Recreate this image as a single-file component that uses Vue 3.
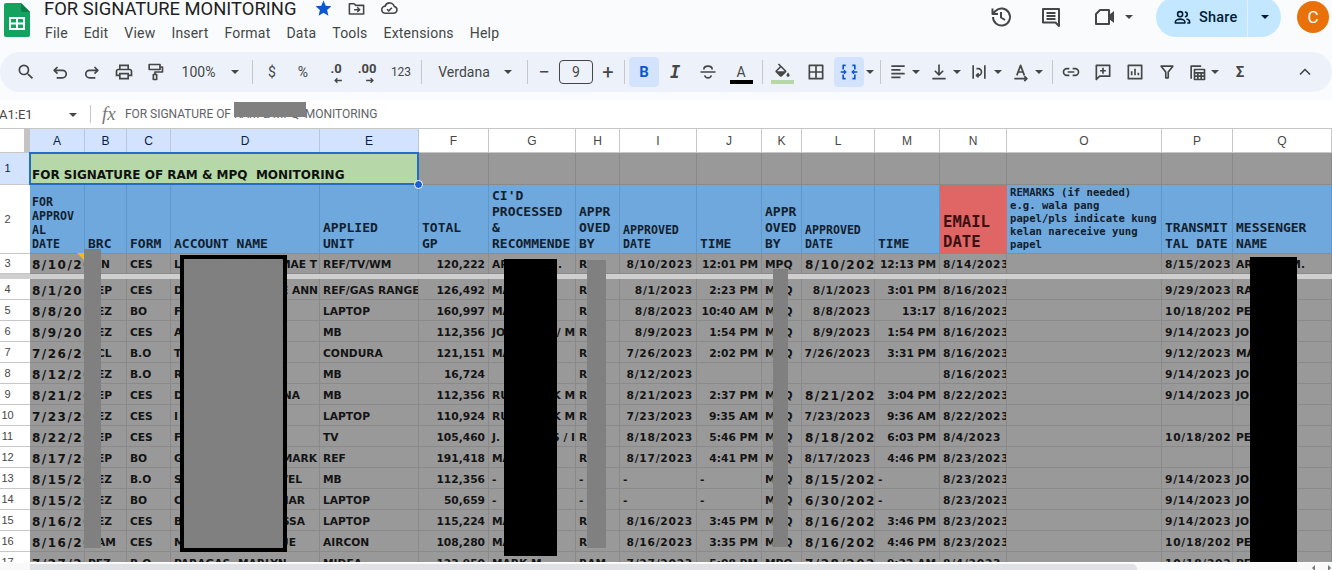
<script setup>
const icons = {
  search: { f: 'M15.5 14h-.79l-.28-.27A6.471 6.471 0 0 0 16 9.5 6.5 6.5 0 1 0 9.5 16c1.61 0 3.09-.59 4.23-1.57l.27.28v.79l5 4.99L20.49 19l-4.99-5zm-6 0C7.01 14 5 11.99 5 9.5S7.01 5 9.5 5 14 7.01 14 9.5 11.99 14 9.5 14z' },
  undo: { s: 'M9 6 5 10l4 4M5 10h10a4.5 4.5 0 0 1 0 9H8' },
  redo: { s: 'M15 6l4 4-4 4M19 10H9a4.5 4.5 0 0 0 0 9h7' },
  print: { f: 'M19 8h-1V3H6v5H5c-1.66 0-3 1.34-3 3v6h4v4h12v-4h4v-6c0-1.66-1.34-3-3-3zM8 5h8v3H8V5zm8 12v2H8v-4h8v2zm2-2v-2H6v2H4v-4c0-.55.45-1 1-1h14c.55 0 1 .45 1 1v4h-2z' },
  paint: { s: 'M5 3h13v6H5zM18 6h3v6h-9v3M10 15h4v6h-4z' },
  strike: { s: 'M7 9c0-2.500 2-4 5-4s5 1.500 5 4M3 12h18M8 16c.5 2 2 3 4 3s3.500-1 4-3' },
  fill: { f: 'M16.56 8.94L7.62 0 6.21 1.41l2.38 2.38-5.15 5.15c-.59.59-.59 1.54 0 2.12l5.5 5.5c.29.29.68.44 1.06.44s.77-.15 1.06-.44l5.5-5.5c.59-.58.59-1.53 0-2.12zM5.21 10L10 5.21 14.79 10H5.21zM19 11.5s-2 2.17-2 3.5c0 1.1.9 2 2 2s2-.9 2-2c0-1.33-2-3.5-2-3.5z' },
  borders: { s: 'M4 4h16v16H4zM12 4v16M4 12h16' },
  merge: { s: 'M8 4H5v5M16 4h3v5M8 20H5v-5M16 20h3v-5M2 12h6M6 10l2 2-2 2M22 12h-6M18 10l-2 2 2 2' },
  align: { s: 'M4 5h16M4 9.5h11M4 14h16M4 18.5h11' },
  valign: { s: 'M12 3v12M7 10.5l5 5 5-5M4 20h16' },
  wrap: { s: 'M5 4v16M19 4v16M9 8h2a4 4 0 0 1 0 8H9m2.500-2.500L9 16l2.500 2.500' },
  rotate: { s: 'M4 20h15M16 17l3 3-3 3M7 16l4.500-12L16 16M8.500 12h6' },
  link: { s: 'M10 8H7a4 4 0 0 0 0 8h3M14 8h3a4 4 0 0 1 0 8h-3M8 12h8' },
  addcomment: { s: 'M4 4h16v13H8l-4 4zM12 7v7M8.500 10.500h7' },
  chart: { s: 'M4 4h16v16H4zM8 16v-5M12 16V8M16 16v-3' },
  filter: { s: 'M5 5h14l-5.500 7v7h-3v-7z' },
  functions: { s: 'M5 20V5h12M9 9h12v12H9zM9 13h12M13 13v8M17 13v8M9 17h12' },
  collapse: { s: 'M6 15l6-6 6 6' },
  history: { s: 'M4 12a8.500 8.500 0 1 0 2.500-6L3.500 9M3.500 3.500V9H9M12 7v5.500l4 2.500' },
  topcomment: { s: 'M4 4h16v17l-3.500-3.500H4zM7.500 8h9M7.500 11h9M7.500 14h9' },
  meet: { s: 'M3 9l4-4h9v14H3z', f: 'M16 10l5-4v12l-5-4z' },
  people: { s: 'M9 11a3.200 3.200 0 1 0 0-6.400A3.200 3.200 0 0 0 9 11zM3 19v-1.500c0-2 3-3.500 6-3.500s6 1.500 6 3.500V19zM15 5a3 3 0 0 1 0 6M17 14c2.500.4 4 1.800 4 3.500V19h-3' },
  star: { f: 'M12 17.270L18.180 21l-1.640-7.030L22 9.240l-7.190-.610L12 2 9.190 8.630 2 9.240l5.460 4.730L5.820 21z' },
  move: { s: 'M3 6h6l2 2h10v11H3zM9 13.500h7M13 10.500l3 3-3 3' },
  cloud: { s: 'M7 18a4.500 4.500 0 0 1-.5-9A6 6 0 0 1 18 9.500a4.300 4.300 0 0 1-.5 8.500zM9 13l2 2 4-4' },
}

const menu = ['File', 'Edit', 'View', 'Insert', 'Format', 'Data', 'Tools', 'Extensions', 'Help']

const rawTools = [
  { x: 26, w: 20, k: 'icon', i: 'search' }, { x: 60, w: 20, k: 'icon', i: 'undo' }, { x: 92, w: 20, k: 'icon', i: 'redo' },
  { x: 124, w: 20, k: 'icon', i: 'print' }, { x: 155, w: 20, k: 'icon', i: 'paint' },
  { x: 198.500, w: 37, k: 'text', t: '100%' }, { x: 235, w: 8, k: 'caret' }, { x: 252, w: 1, k: 'sep' },
  { x: 272, w: 14, k: 'text', t: '$' }, { x: 303, w: 14, k: 'text', t: '%' },
  { x: 336, w: 18, k: 'dec', t: '.0', d: 'M7 3H1M3 1 1 3l2 2' }, { x: 367, w: 20, k: 'dec', t: '.00', d: 'M1 3h6M5 1l2 2-2 2' },
  { x: 401, w: 22, k: 'small', t: '123' }, { x: 421, w: 1, k: 'sep' },
  { x: 464, w: 54, k: 'text', t: 'Verdana' }, { x: 508, w: 8, k: 'caret' }, { x: 527, w: 1, k: 'sep' },
  { x: 544, w: 14, k: 'text', t: '−', c: 'big' }, { x: 576, w: 34, k: 'box', t: '9' }, { x: 608, w: 16, k: 'text', t: '+', c: 'big' },
  { x: 624, w: 1, k: 'sep' }, { x: 644, w: 30, k: 'text', t: 'B', c: 'bold on' },
  { x: 675, w: 16, k: 'text', t: 'I', c: 'ital' }, { x: 708, w: 20, k: 'icon', i: 'strike' },
  { x: 741, w: 23, k: 'color', t: 'A' }, { x: 762, w: 1, k: 'sep' }, { x: 782, w: 23, k: 'fill', i: 'fill' },
  { x: 816, w: 20, k: 'icon', i: 'borders' }, { x: 849, w: 30, k: 'icon', i: 'merge', c: 'on' }, { x: 870, w: 8, k: 'caret' },
  { x: 880, w: 1, k: 'sep' }, { x: 898, w: 20, k: 'icon', i: 'align' }, { x: 916, w: 8, k: 'caret' },
  { x: 939, w: 20, k: 'icon', i: 'valign' }, { x: 957, w: 8, k: 'caret' }, { x: 979, w: 20, k: 'icon', i: 'wrap' }, { x: 998, w: 8, k: 'caret' },
  { x: 1021, w: 20, k: 'icon', i: 'rotate' }, { x: 1039, w: 8, k: 'caret' }, { x: 1052, w: 1, k: 'sep' },
  { x: 1071, w: 20, k: 'icon', i: 'link' }, { x: 1103, w: 20, k: 'icon', i: 'addcomment' }, { x: 1135, w: 20, k: 'icon', i: 'chart' },
  { x: 1167, w: 20, k: 'icon', i: 'filter' }, { x: 1197, w: 22, k: 'icon', i: 'functions' }, { x: 1215, w: 8, k: 'caret' },
  { x: 1240, w: 14, k: 'text', t: 'Σ', c: 'bold' }, { x: 1305, w: 20, k: 'icon', i: 'collapse' },
]
let edge = 0
const tools = rawTools.map((t) => {
  const left = t.x - t.w / 2
  const out = { ...t, style: { width: t.w + 'px', marginLeft: left - edge + 'px' } }
  edge = left + t.w
  return out
})

const colNames = 'ABCDEFGHIJKLMNOPQ'.split('')
const selected = 'ABCDE'

const heads = [
  { t: 'FOR\nAPPROV\nAL\nDATE', c: 'h12 first' }, { t: 'BRC' }, { t: 'FORM' }, { t: 'ACCOUNT NAME' }, { t: 'APPLIED\nUNIT' }, { t: 'TOTAL\nGP' },
  { t: "CI'D\nPROCESSED\n&\nRECOMMENDE" }, { t: 'APPR\nOVED\nBY' }, { t: 'APPROVED\nDATE', c: 'h12' }, { t: 'TIME' },
  { t: 'APPR\nOVED\nBY' }, { t: 'APPROVED\nDATE', c: 'h12' }, { t: 'TIME' }, { t: 'EMAIL\nDATE', c: 'hred' },
  { t: 'REMARKS (if needed)\ne.g. wala pang\npapel/pls indicate kung\nkelan nareceive yung\npapel', c: 'h10' },
  { t: 'TRANSMIT\nTAL DATE' }, { t: 'MESSENGER\nNAME' },
]

const data = [
  [3, '8/10/2023', 'N', 'CES', 'L', ['MAE T', 2], 'REF/TV/WM', '120,222', 'AR', ['.', 13], 'RAM', '8/10/2023', '12:01 PM', 'MPQ', '8/10/2023', 1, '12:13 PM', '8/14/2023', '8/15/2023', 'AR', ['M.', 26]],
  [4, '8/1/2023', 'EP', 'CES', 'D', ['E ANN', 1], 'REF/GAS RANGE', '126,492', 'MA', null, 'RAM', '8/1/2023', '2:23 PM', 'MPQ', '8/1/2023', 0, '3:01 PM', '8/16/2023', '9/29/2023', 'RA'],
  [5, '8/8/2023', 'EZ', 'BO', 'F', null, 'LAPTOP', '160,997', 'MA', null, 'RAM', '8/8/2023', '10:40 AM', 'MPQ', '8/8/2023', 0, '13:17', '8/16/2023', '10/18/2023', 'PE'],
  [6, '8/9/2023', 'EZ', 'CES', 'A', null, 'MB', '112,356', 'JO', ['/ M', 0], 'RAM', '8/9/2023', '1:54 PM', 'MPQ', '8/9/2023', 0, '1:54 PM', '8/16/2023', '9/14/2023', 'JO'],
  [7, '7/26/2023', 'CL', 'B.O', 'T', null, 'CONDURA', '121,151', 'MA', null, 'RAM', '7/26/2023', '2:02 PM', 'MPQ', '7/26/2023', 0, '3:31 PM', '8/16/2023', '9/12/2023', 'MA'],
  [8, '8/12/2023', 'EZ', 'B.O', 'R', null, 'MB', '16,724', '', null, 'RAM', '8/12/2023', '', '', '', 0, '', '8/16/2023', '9/14/2023', 'JO'],
  [9, '8/21/2023', 'EP', 'CES', 'D', ['NA', 19], 'MB', '112,356', 'RU', ['K M', 0], 'RAM', '8/21/2023', '2:37 PM', 'MPQ', '8/21/2023', 1, '3:04 PM', '8/22/2023', '9/14/2023', 'JO'],
  [10, '7/23/2023', 'EZ', 'CES', 'I', null, 'LAPTOP', '110,924', 'RU', ['K M', 0], 'RAM', '7/23/2023', '9:35 AM', 'MPQ', '7/23/2023', 0, '9:36 AM', '8/22/2023', '', ''],
  [11, '8/22/2023', 'EP', 'CES', 'F', null, 'TV', '105,460', 'J.', ['S / I', 0], 'RAM', '8/18/2023', '5:46 PM', 'MPQ', '8/18/2023', 1, '6:03 PM', '8/4/2023', '10/18/2023', 'PE'],
  [12, '8/17/2023', 'EP', 'BO', 'G', ['MARK', 2], 'REF', '191,418', 'MA', null, 'RAM', '8/17/2023', '4:41 PM', 'MPQ', '8/17/2023', 0, '4:46 PM', '8/23/2023', '', ''],
  [13, '8/15/2023', 'EZ', 'B.O', 'S', ['VEL', 17], 'MB', '112,356', '-', null, '-', '-', '-', 'MPQ', '8/15/2023', 1, '-', '8/23/2023', '9/14/2023', 'JO'],
  [14, '8/15/2023', 'EZ', 'BO', 'C', ['MAR', 14], 'LAPTOP', '50,659', '-', null, '-', '-', '-', 'MPQ', '6/30/2023', 1, '-', '8/23/2023', '9/14/2023', 'JO'],
  [15, '8/16/2023', 'EZ', 'CES', 'B', ['SSA', 14], 'LAPTOP', '115,224', 'MA', null, 'RAM', '8/16/2023', '3:45 PM', 'MPQ', '8/16/2023', 1, '3:46 PM', '8/23/2023', '9/14/2023', 'JO'],
  [16, '8/16/2023', 'AM', 'CES', 'M', ['UE', 23], 'AIRCON', '108,280', 'MA', null, 'RAM', '8/16/2023', '3:35 PM', 'MPQ', '8/16/2023', 1, '4:46 PM', '8/23/2023', '10/18/2023', 'PE'],
  [17, '7/27/2023', 'PEZ', 'B.O', 'PARAGAS, MARLYN', null, 'MIDEA', '123,950', 'MARK M.', null, 'RAM', '7/27/2023', '5:08 PM', 'MPQ', '7/28/2023', 1, '9:22 AM', '8/4/2023', '10/18/2023', 'PE'],
]

const side = (t, pair, cls) => ({ t, r: pair ? pair[0] : '', gap: pair ? pair[1] : 0, c: cls })
const rows = data.map((d) => {
  const [n, a, b, c, dl, dr, e, f, gl, gr, h, i, j, k, l, lbig, m, nd, p, q, qr] = d
  const right = (t) => (t === '-' ? 'L' : 'R')
  const bpad = b === 'PEZ' ? 3 : b === 'N' ? 16 : 12
  return {
    n,
    cells: [
      { t: a, c: 'bigdate first' },
      { t: b, c: 'L', pad: bpad },
      { t: c, c: 'L' },
      side(dl, dr, 'L split'),
      { t: e, c: 'L' },
      { t: f, c: 'R' },
      side(gl, gr, 'L split'),
      { t: h, c: 'L' },
      { t: i, c: right(i) + (i === '-' ? '' : ' date') },
      { t: j, c: right(j) },
      { t: k, c: 'L' },
      { t: l, c: lbig ? 'bigdate' : 'R date' },
      { t: m, c: right(m) },
      { t: nd, c: 'L date' },
      { t: '', c: 'L' },
      { t: p, c: 'L date' },
      side(q, qr, 'L split'),
    ],
  }
})
</script>

<template>
  <div class="app">
    <header class="top">
      <svg class="logo" viewBox="0 0 26 34">
        <path class="lg1" d="M2 0h15l9 9v23a2 2 0 0 1-2 2H2a2 2 0 0 1-2-2V2a2 2 0 0 1 2-2z" />
        <path class="lg2" d="M17 0l9 9h-7a2 2 0 0 1-2-2z" />
        <path class="lg3" d="M6 15h14v11H6zM13 15v11M6 20.500h14" />
      </svg>
      <div class="titles">
        <div class="titlerow">
          <span class="title">FOR SIGNATURE MONITORING</span>
          <svg class="ti star" viewBox="0 0 24 24"><path :d="icons.star.f" /></svg>
          <svg class="ti" viewBox="0 0 24 24"><path :d="icons.move.s" class="st" /></svg>
          <svg class="ti" viewBox="0 0 24 24"><path :d="icons.cloud.s" class="st" /></svg>
        </div>
        <nav class="menu"><span v-for="m in menu" :key="m">{{ m }}</span></nav>
      </div>
      <div class="actions">
        <svg class="big-ic hist" viewBox="0 0 24 24"><path :d="icons.history.s" class="st" /></svg>
        <svg class="big-ic cmt" viewBox="0 0 24 24"><path :d="icons.topcomment.s" class="st" /></svg>
        <svg class="big-ic meet" viewBox="0 0 24 24"><path :d="icons.meet.s" class="st" /><path :d="icons.meet.f" /></svg>
        <i class="caret meetcaret"></i>
        <div class="share">
          <svg class="people" viewBox="0 0 24 24"><path :d="icons.people.s" class="st" /></svg>
          <span class="sharetxt">Share</span>
          <span class="sharemore"><i class="caret dark"></i></span>
        </div>
        <div class="avatar">C</div>
      </div>
    </header>

    <div class="toolbar">
      <template v-for="(t, idx) in tools" :key="idx">
        <span v-if="t.k === 'sep'" class="sep" :style="t.style"></span>
        <span v-else-if="t.k === 'caret'" class="tool" :style="t.style"><i class="caret"></i></span>
        <span v-else-if="t.k === 'icon'" class="tool" :class="t.c" :style="t.style">
          <svg class="tic" viewBox="0 0 24 24">
            <path v-if="icons[t.i].f" :d="icons[t.i].f" />
            <path v-if="icons[t.i].s" :d="icons[t.i].s" class="st" />
          </svg>
        </span>
        <span v-else-if="t.k === 'fill'" class="tool stack" :style="t.style">
          <svg class="fillic" viewBox="0 0 24 18"><path :d="icons.fill.f" /></svg>
          <i class="bar green"></i>
        </span>
        <span v-else-if="t.k === 'color'" class="tool stack" :style="t.style">
          <span class="colA">{{ t.t }}</span>
          <i class="bar black"></i>
        </span>
        <span v-else-if="t.k === 'box'" class="tool box" :style="t.style">{{ t.t }}</span>
        <span v-else-if="t.k === 'dec'" class="tool dec" :style="t.style">
          {{ t.t }}
          <svg class="decarrow" viewBox="0 0 8 6"><path :d="t.d" /></svg>
        </span>
        <span v-else-if="t.k === 'small'" class="tool small" :style="t.style">{{ t.t }}</span>
        <span v-else class="tool txt" :class="t.c" :style="t.style">{{ t.t }}</span>
      </template>
    </div>

    <div class="formula">
      <span class="namebox">A1:E1</span>
      <i class="caret namecaret"></i>
      <span class="fsep"></span>
      <span class="fx">fx</span>
      <span class="ftext">FOR SIGNATURE OF RAM &amp; MPQ&nbsp; MONITORING</span>
      <span class="fred"></span>
    </div>

    <div class="sheetwrap">
      <div class="sheet">
        <div class="corner"><i></i></div>
        <div v-for="c in colNames" :key="c" class="colh" :class="{ sel: selected.includes(c) }">{{ c }}</div>

        <div class="rownum sel">1</div>
        <div class="merged">
          <span>FOR SIGNATURE OF RAM &amp; MPQ&nbsp; MONITORING</span>
          <i class="handle"></i>
        </div>
        <div v-for="c in 12" :key="'e' + c" class="cell"></div>

        <div class="rownum">2</div>
        <div v-for="(h, i) in heads" :key="'h' + i" class="head" :class="h.c">{{ h.t }}</div>

        <template v-for="r in rows" :key="r.n">
          <div class="rownum">{{ r.n }}</div>
          <div
            v-for="(c, i) in r.cells"
            :key="i"
            class="cell"
            :class="c.c"
            :style="c.pad ? { paddingLeft: c.pad + 'px' } : null"
          >
            <span>{{ c.t }}</span>
            <span v-if="c.r" :style="{ paddingRight: c.gap + 'px' }">{{ c.r }}</span>
          </div>
          <div v-if="r.n === 3" class="frozen"></div>
        </template>

        <i class="note"></i>
        <i class="red gray rb"></i>
        <i class="red frame"></i>
        <i class="red black rg"></i>
        <i class="red gray rh"></i>
        <i class="red gray rk"></i>
        <i class="red black rq"></i>
      </div>
    </div>

    <div class="scroll">
      <div class="thumb"></div>
      <span class="arrow left"></span>
      <span class="arrow right"></span>
    </div>
  </div>
</template>

<style scoped>
.app {
  width: 1332px;
  height: 570px;
  overflow: hidden;
  display: flex;
  flex-direction: column;
  background: #f9fbfd;
  font-family: Roboto, "Open Sans", sans-serif;
  color: #1f1f1f;
}
path { fill: currentColor; }
path.st { fill: none; stroke: currentColor; stroke-width: 2; stroke-linejoin: round; }
path.lg1 { fill: #12a35f; }
path.lg2 { fill: #0b7f49; }
path.lg3 { fill: none; stroke: #fff; stroke-width: 2; }

/* header */
.top { height: 52px; display: flex; flex: none; }
.logo { width: 26px; height: 34px; margin: 3px 0 0 4px; flex: none; }
.titles { margin-left: 14px; }
.titlerow { display: flex; align-items: center; height: 17px; }
.title { font-size: 18.400px; line-height: 17px; letter-spacing: 0; color: #1f1f1f; white-space: nowrap; width: 270px; }
.ti { width: 19px; height: 19px; margin-right: 14px; color: #444746; flex: none; }
.star { color: #0b57d0; }
.menu { display: flex; gap: 16px; margin-top: 8px; margin-left: 1px; font-size: 14px; line-height: 16px; letter-spacing: .2px; color: #444746; }
.actions { margin-left: auto; display: flex; align-items: flex-start; position: relative; }
.big-ic { width: 24px; height: 24px; margin-top: 5px; color: #444746; flex: none; }
.cmt { margin-left: 26px; }
.meet { margin-left: 30px; }
.meetcaret { margin: 15px 0 0 8px; }
.share {
  width: 125px; height: 40px; margin: -3px 0 0 23px; flex: none;
  background: #c2e7ff; border-radius: 20px; display: flex; align-items: center; color: #001d35; position: relative;
}
.people { width: 19px; height: 19px; margin-left: 17px; flex: none; }
.sharetxt { font-size: 14.500px; font-weight: 500; margin-left: 7px; letter-spacing: .2px; }
.sharemore { position: absolute; right: 0; top: 0; bottom: 0; width: 33px; border-left: 1px solid #e3f3ff; display: flex; align-items: center; justify-content: center; }
.avatar {
  width: 32px; height: 32px; border-radius: 50%; background: #e8710a; color: #fff; margin: 1px 3px 0 16px;
  display: flex; align-items: center; justify-content: center; font-size: 17px; flex: none;
}

.caret { display: inline-block; width: 0; height: 0; border-left: 4px solid transparent; border-right: 4px solid transparent; border-top: 4px solid #444746; flex: none; }
.caret.dark { border-top-color: #001d35; }

/* toolbar */
.toolbar {
  height: 40px; flex: none; background: #edf2fa; display: flex; align-items: center; margin-bottom: 8px;
  border-radius: 20px;
}
.tool { height: 30px; display: flex; align-items: center; justify-content: center; flex: none; color: #444746; font-size: 14px; white-space: nowrap; border-radius: 4px; box-sizing: border-box; }
.tic { width: 20px; height: 20px; flex: none; }
.sep { width: 1px; height: 24px; background: #c7c7c7; flex: none; }
.txt.big { font-size: 20px; }
.txt.bold { font-weight: 700; font-size: 15px; }
.txt.ital { font-style: italic; font-weight: 700; font-size: 17px; font-family: "DejaVu Sans Mono", monospace; }
.on { background: #d3e3fd; color: #0b57d0; }
.txt.on { color: #0b57d0; }
.small { font-size: 12px; }
.dec { font-size: 13px; font-weight: 700; position: relative; align-items: flex-start; padding-top: 5px; line-height: 14px; }
.decarrow { position: absolute; left: 50%; bottom: 3px; width: 9px; height: 7px; margin-left: -2px; }
.decarrow path { fill: none; stroke: #444746; stroke-width: 1.200; }
.box { border: 1px solid #444746; border-radius: 4px; height: 24px; color: #444746; font-size: 14px; }
.stack { flex-direction: column; justify-content: flex-end; padding-bottom: 3px; }
.colA { font-size: 14px; line-height: 14px; margin-bottom: 1px; }
.bar { display: block; width: 23px; height: 4px; flex: none; }
.bar.black { background: #000; }
.bar.green { background: #b6d7a8; }
.fillic { width: 19px; height: 15px; margin-bottom: 2px; }

/* formula bar */
.formula { height: 28px; flex: none; background: #fff; display: flex; align-items: center; position: relative; box-sizing: border-box; }
.namebox { font-size: 13px; color: #444746; margin-left: -1px; width: 70px; }
.namecaret { margin-top: 1px; }
.fsep { width: 1px; height: 18px; background: #c7c7c7; margin-left: 13px; }
.fx { font-family: "Liberation Serif", serif; font-style: italic; font-size: 19px; color: #777; margin-left: 11px; width: 23px; }
.ftext { font-size: 12px; letter-spacing: -.04px; color: #5f6368; white-space: nowrap; }
.fred { position: absolute; left: 234px; top: 2px; width: 72px; height: 15px; background: #808080; }

/* sheet */
.sheetwrap { height: 434px; flex: none; overflow: hidden; background: #fff; }
.sheet {
  position: relative;
  display: grid;
  width: 1332px;
  grid-template-columns: 30px 55px 42px 44px 149px 99px 70px 87px 44px 77px 65px 40px 73px 65px 67px 155px 71px 99px;
  grid-template-rows: 24px 32px 69px 20px 5px repeat(14, 21px);
  border-top: 1px solid #c4c7c5;
  box-sizing: border-box;
}
.corner { background: #fff; border-bottom: 1px solid #c7c7c7; box-sizing: border-box; display: flex; justify-content: flex-end; }
.corner i { width: 6px; background: #c4c4c4; }
.colh {
  background: #fff; border-right: 1px solid #c7c7c7; border-bottom: 1px solid #c7c7c7; box-sizing: border-box;
  display: flex; align-items: center; justify-content: center;
  font: 12px/1 "Liberation Sans", Arial, sans-serif; color: #444746;
}
.colh.sel { background: #d3e3fd; color: #041e49; border-color: #b8c7de; }
.rownum {
  background: #fff; border-bottom: 1px solid #c7c7c7; box-sizing: border-box; padding-right: 15px;
  display: flex; align-items: center; justify-content: center;
  font: 11px/1 "Liberation Sans", Arial, sans-serif; color: #444746;
}
.rownum.sel { background: #d3e3fd; color: #041e49; }
.cell {
  background: #999; border-right: 1px solid #8a8a8a; border-bottom: 1px solid #8a8a8a; box-sizing: border-box;
  display: flex; align-items: flex-end; overflow: hidden; white-space: nowrap; min-width: 0;
  padding: 0 3px 1px 3px;
  font: bold 10.670px/14px "DejaVu Sans", Verdana, sans-serif; color: #141414;
}
.cell span { flex: none; }
.cell.R { justify-content: flex-end; }
.cell.L { justify-content: flex-start; }
.cell.split { justify-content: space-between; padding-right: 0; }
.cell.date { letter-spacing: .75px; }
.cell.bigdate { font-size: 12px; letter-spacing: 1.500px; }
.cell.first { padding-left: 2px; }
.frozen { grid-column: 1 / -1; background: #cfcfcf; }
.merged {
  grid-column: span 5; background: #b6d7a8; position: relative; box-sizing: border-box; margin-left: -1px;
  border: 2px solid #1f6fc4; display: flex; align-items: flex-end; padding: 0 1px 0 1px; margin-top: -1px;
  font: bold 12px/16px "DejaVu Sans", Verdana, sans-serif; color: #111; white-space: nowrap; z-index: 2;
}
.handle { position: absolute; right: -6px; bottom: -6px; width: 7px; height: 7px; background: #1a5fd0; border: 1.500px solid #fff; border-radius: 50%; }
.head {
  background: #6fa8dc; border-right: 1px solid #5f97cc; border-bottom: 1px solid #5f97cc; box-sizing: border-box;
  display: flex; align-items: flex-end; padding: 0 1px 1px 3px; overflow: hidden; white-space: pre;
  font: bold 13px/16px "DejaVu Sans Mono", monospace; color: #12202e;
}
.head.first { padding-left: 2px; }
.head.h12 { font-size: 11.600px; line-height: 14px; padding-bottom: 2px; }
.head.h10 { font-size: 10.600px; line-height: 13px; padding-bottom: 2px; }
.head.hred { background: #e06666; font-size: 15.600px; line-height: 20px; border-color: #e06666; color: #3a1010; }

.note { position: absolute; left: 77px; top: 124px; width: 0; height: 0; border-top: 8px solid #f1b91c; border-left: 8px solid transparent; }
.red { position: absolute; display: block; z-index: 3; }
.gray { background: #808080; }
.black { background: #000; }
.rb { left: 84px; top: 120px; width: 17px; height: 299px; }
.frame { left: 180px; top: 126px; width: 107px; height: 297px; box-sizing: border-box; border: 4.500px solid #000; background: #808080; }
.rg { left: 504px; top: 130px; width: 53px; height: 297px; }
.rh { left: 587px; top: 131px; width: 19px; height: 288px; }
.rk { left: 773px; top: 140px; width: 15px; height: 278px; }
.rq { left: 1250px; top: 128px; width: 47px; height: 306px; }

/* scrollbar */
.scroll { height: 8px; flex: none; background: #f8f9fa; border-top: 1px solid #fff; box-sizing: border-box; position: relative; }
.thumb { position: absolute; left: 30px; width: 1107px; top: 1px; bottom: 0; background: #dfe1e5; border-radius: 0 5px 0 0; }
.arrow { position: absolute; top: 2px; width: 0; height: 0; border-top: 3px solid transparent; border-bottom: 3px solid transparent; }
.arrow.left { left: 1312px; border-right: 3px solid #777; }
.arrow.right { left: 1328px; border-left: 3px solid #777; }
</style>

<style>
html, body { margin: 0; background: #fff; }
</style>
